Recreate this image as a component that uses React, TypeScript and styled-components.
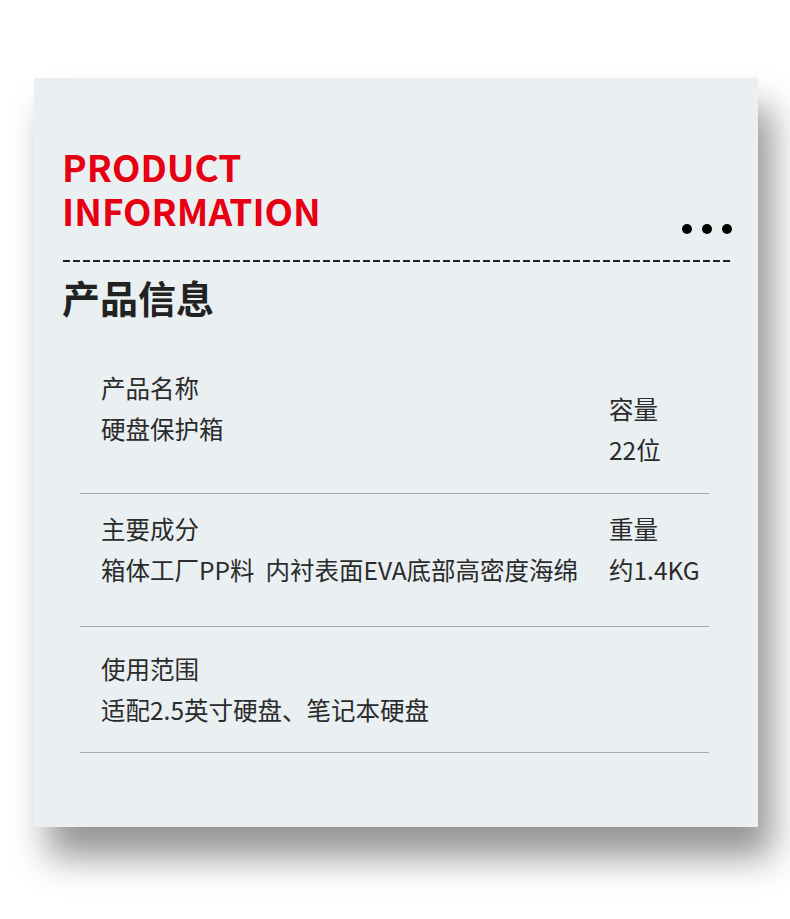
import styled, { createGlobalStyle } from 'styled-components'

const GlobalStyle = createGlobalStyle`
  html, body {
    margin: 0;
    padding: 0;
    background: #ffffff;
  }
  body {
    font-family: 'Noto Sans CJK SC', 'Noto Sans', sans-serif;
  }
`

interface Spec {
  label: string
  value: string
  sideLabel?: string
  sideValue?: string
  padTop: number
  padBottom: number
  sideOffset?: number
}

const specs: Spec[] = [
  {
    label: '产品名称',
    value: '硬盘保护箱',
    sideLabel: '容量',
    sideValue: '22位',
    padTop: 0,
    padBottom: 23,
    sideOffset: 21,
  },
  {
    label: '主要成分',
    value: '箱体工厂PP料  内衬表面EVA底部高密度海绵',
    sideLabel: '重量',
    sideValue: '约1.4KG',
    padTop: 14,
    padBottom: 36,
  },
  {
    label: '使用范围',
    value: '适配2.5英寸硬盘、笔记本硬盘',
    padTop: 21,
    padBottom: 22,
  },
]

export default function App() {
  return (
    <Page>
      <GlobalStyle />
      <Card>
        <Header>
          <Title>
            PRODUCT
            <br />
            INFORMATION
          </Title>
          <Dots>
            <Dot />
            <Dot />
            <Dot />
          </Dots>
        </Header>
        <Dashed />
        <Heading>产品信息</Heading>

        <SpecList>
          {specs.map((s) => (
            <SpecRow key={s.label} padTop={s.padTop} padBottom={s.padBottom}>
              <SpecCol>
                <SpecText>{s.label}</SpecText>
                <SpecText>{s.value}</SpecText>
              </SpecCol>
              {s.sideLabel && (
                <SpecCol offset={s.sideOffset}>
                  <SpecText>{s.sideLabel}</SpecText>
                  <SpecText>{s.sideValue}</SpecText>
                </SpecCol>
              )}
            </SpecRow>
          ))}
        </SpecList>
      </Card>
    </Page>
  )
}

const Page = styled.div`
  width: 790px;
  height: 919px;
  padding: 78px 0 0 34px;
  box-sizing: border-box;
  overflow: hidden;
`

const Card = styled.div`
  width: 724px;
  height: 749px;
  box-sizing: border-box;
  background-color: #eaeff2;
  padding: 66px 26px 0 28px;
  box-shadow: 14px 30px 34px rgba(0, 0, 0, 0.42);
`

const Header = styled.div`
  display: flex;
  justify-content: space-between;
  align-items: flex-end;
`

const Title = styled.h1`
  margin: 0;
  color: #e60012;
  font-family: 'Noto Sans CJK SC', 'Noto Sans', sans-serif;
  font-weight: 700;
  font-size: 37px;
  line-height: 44px;
`

const Dots = styled.div`
  display: flex;
  gap: 10px;
  margin-bottom: -2px;
`

const Dot = styled.span`
  width: 10px;
  height: 10px;
  border-radius: 50%;
  background-color: #000000;
`

const Dashed = styled.div`
  margin-top: 28px;
  margin-left: 1px;
  height: 1.5px;
  background-image: repeating-linear-gradient(
    to right,
    #222222 0,
    #222222 7px,
    transparent 7px,
    transparent 10px
  );
`

const Heading = styled.h2`
  margin: 10px 0 0;
  color: #222222;
  font-family: 'Noto Sans CJK SC', sans-serif;
  font-weight: 700;
  font-size: 38px;
  line-height: 50px;
`

const SpecList = styled.div`
  margin: 45px 0 0 18px;
  width: 629px;
`

interface SpecRowProps {
  padTop: number
  padBottom: number
}

const SpecRow = styled.div<SpecRowProps>`
  display: grid;
  grid-template-columns: 508px auto;
  align-items: start;
  padding: ${({ padTop }) => padTop}px 0 ${({ padBottom }) => padBottom}px 21px;
  border-bottom: 1px solid #a9a9a9;
`

interface SpecColProps {
  offset?: number
}

const SpecCol = styled.div<SpecColProps>`
  display: flex;
  flex-direction: column;
  margin-top: ${({ offset }) => offset ?? 0}px;
`

const SpecText = styled.p`
  margin: 0;
  color: #2b2b2b;
  font-family: 'Noto Sans CJK SC', sans-serif;
  font-size: 24.5px;
  line-height: 41px;
  white-space: pre;
`
